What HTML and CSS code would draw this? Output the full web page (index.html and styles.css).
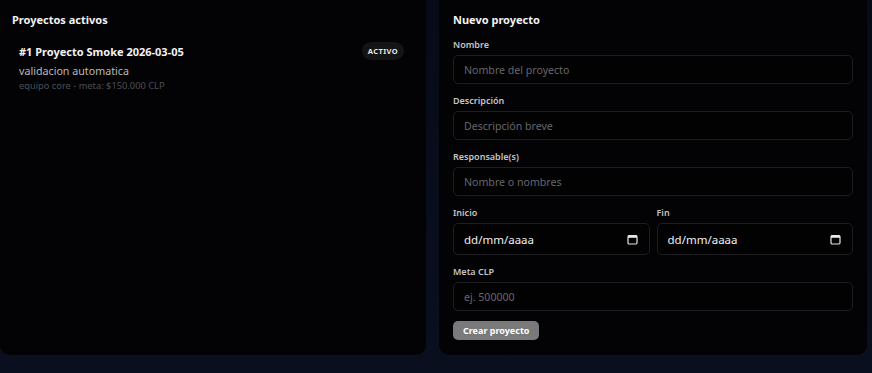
FILE: index.html
```html
<!DOCTYPE html>
<html lang="es">
<head>
  <meta charset="UTF-8">
  <meta name="viewport" content="width=device-width, initial-scale=1.0">
  <title>Proyectos</title>
  <link rel="stylesheet" href="styles.css">
</head>
<body>

  <main class="layout">

    <section class="card">
      <h2 class="card-title">Proyectos activos</h2>

      <ul class="project-list">
        <li class="project-item">
          <div class="project-head">
            <span class="project-name">#1 Proyecto Smoke 2026-03-05</span>
            <span class="badge">ACTIVO</span>
          </div>
          <div class="project-desc">validacion automatica</div>
          <div class="project-meta">equipo core - meta: $150.000 CLP</div>
        </li>
      </ul>
    </section>

    <section class="card">
      <h2 class="card-title">Nuevo proyecto</h2>

      <form class="project-form">
        <label class="field">
          <span class="field-label">Nombre</span>
          <input type="text" placeholder="Nombre del proyecto">
        </label>

        <label class="field">
          <span class="field-label">Descripción</span>
          <input type="text" placeholder="Descripción breve">
        </label>

        <label class="field">
          <span class="field-label">Responsable(s)</span>
          <input type="text" placeholder="Nombre o nombres">
        </label>

        <div class="field-row">
          <div class="field">
            <span class="field-label">Inicio</span>
            <div class="date-field">
              <span>dd/mm/aaaa</span>
              <svg width="11" height="11" viewBox="0 0 11 11"><rect x="1" y="1.5" width="9" height="8.5" rx="1.2" fill="none" stroke="#e8e8e8" stroke-width="1.2"/><rect x="1" y="1.5" width="9" height="2.3" fill="#e8e8e8"/></svg>
            </div>
          </div>
          <div class="field">
            <span class="field-label">Fin</span>
            <div class="date-field">
              <span>dd/mm/aaaa</span>
              <svg width="11" height="11" viewBox="0 0 11 11"><rect x="1" y="1.5" width="9" height="8.5" rx="1.2" fill="none" stroke="#e8e8e8" stroke-width="1.2"/><rect x="1" y="1.5" width="9" height="2.3" fill="#e8e8e8"/></svg>
            </div>
          </div>
        </div>

        <label class="field">
          <span class="field-label">Meta CLP</span>
          <input type="text" placeholder="ej. 500000">
        </label>

        <div class="form-actions">
          <button type="button" class="btn">Crear proyecto</button>
        </div>
      </form>
    </section>

  </main>

</body>
</html>
```

FILE: styles.css
```css
* {
  box-sizing: border-box;
}

body {
  margin: 0;
  height: 373px;
  overflow: hidden;
  font-family: "Noto Sans", "Open Sans", sans-serif;
  color: #f2f2f2;
  background: linear-gradient(180deg, #070b17 0%, #0a0f1f 100%);
}

.layout {
  display: grid;
  grid-template-columns: 426px 428px;
  gap: 13px;
  margin-top: -8px;
  align-items: start;
}

.card {
  background-color: #030305;
  border-radius: 10px;
  padding: 20px 12px 14px;
  height: 363px;
}

.card + .card {
  padding: 20px 14px 14px;
}

.card-title {
  margin: 0 0 10px;
  font-size: 11px;
  font-weight: 700;
  line-height: 16px;
}

.project-list {
  list-style: none;
  margin: 0;
  padding: 4px 10px 0 7px;
}

.project-item {
  padding: 0;
}

.project-head {
  display: flex;
  justify-content: space-between;
  align-items: center;
  height: 18px;
}

.project-name {
  font-size: 11px;
  font-weight: 700;
}

.badge {
  background-color: #141417;
  color: #e6e6e6;
  font-size: 7.5px;
  font-weight: 700;
  letter-spacing: 0.4px;
  padding: 4px 6px;
  border-radius: 9px;
}

.project-desc {
  margin-top: 4px;
  font-size: 10.7px;
  color: #b9b9b9;
}

.project-meta {
  margin-top: 1px;
  font-size: 9.3px;
  color: #4e4e52;
}

.project-form {
  display: flex;
  flex-direction: column;
  gap: 10px;
}

.field {
  display: flex;
  flex-direction: column;
  gap: 4px;
  flex: 1;
}

.field-label {
  font-size: 9px;
  font-weight: 600;
  color: #c4c4c4;
  line-height: 13px;
}

.field-row {
  display: flex;
  gap: 7px;
}

input {
  height: 29px;
  padding: 0 10px;
  background-color: #020203;
  border: 1px solid #1e1e22;
  border-radius: 5px;
  color: #eee;
  font-family: inherit;
  font-size: 10.6px;
}

input::placeholder {
  color: #66666b;
}

.date-field {
  height: 32px;
  display: flex;
  align-items: center;
  justify-content: space-between;
  padding: 0 11px 0 10px;
  background-color: #020203;
  border: 1px solid #1e1e22;
  border-radius: 5px;
  font-size: 11.5px;
  color: #f0f0f0;
}

.form-actions {
  display: flex;
}

.btn {
  background-color: #7a7a7a;
  color: #fff;
  border: none;
  border-radius: 5px;
  padding: 0 10px;
  height: 19px;
  font-family: inherit;
  font-size: 9px;
  font-weight: 700;
}
```
